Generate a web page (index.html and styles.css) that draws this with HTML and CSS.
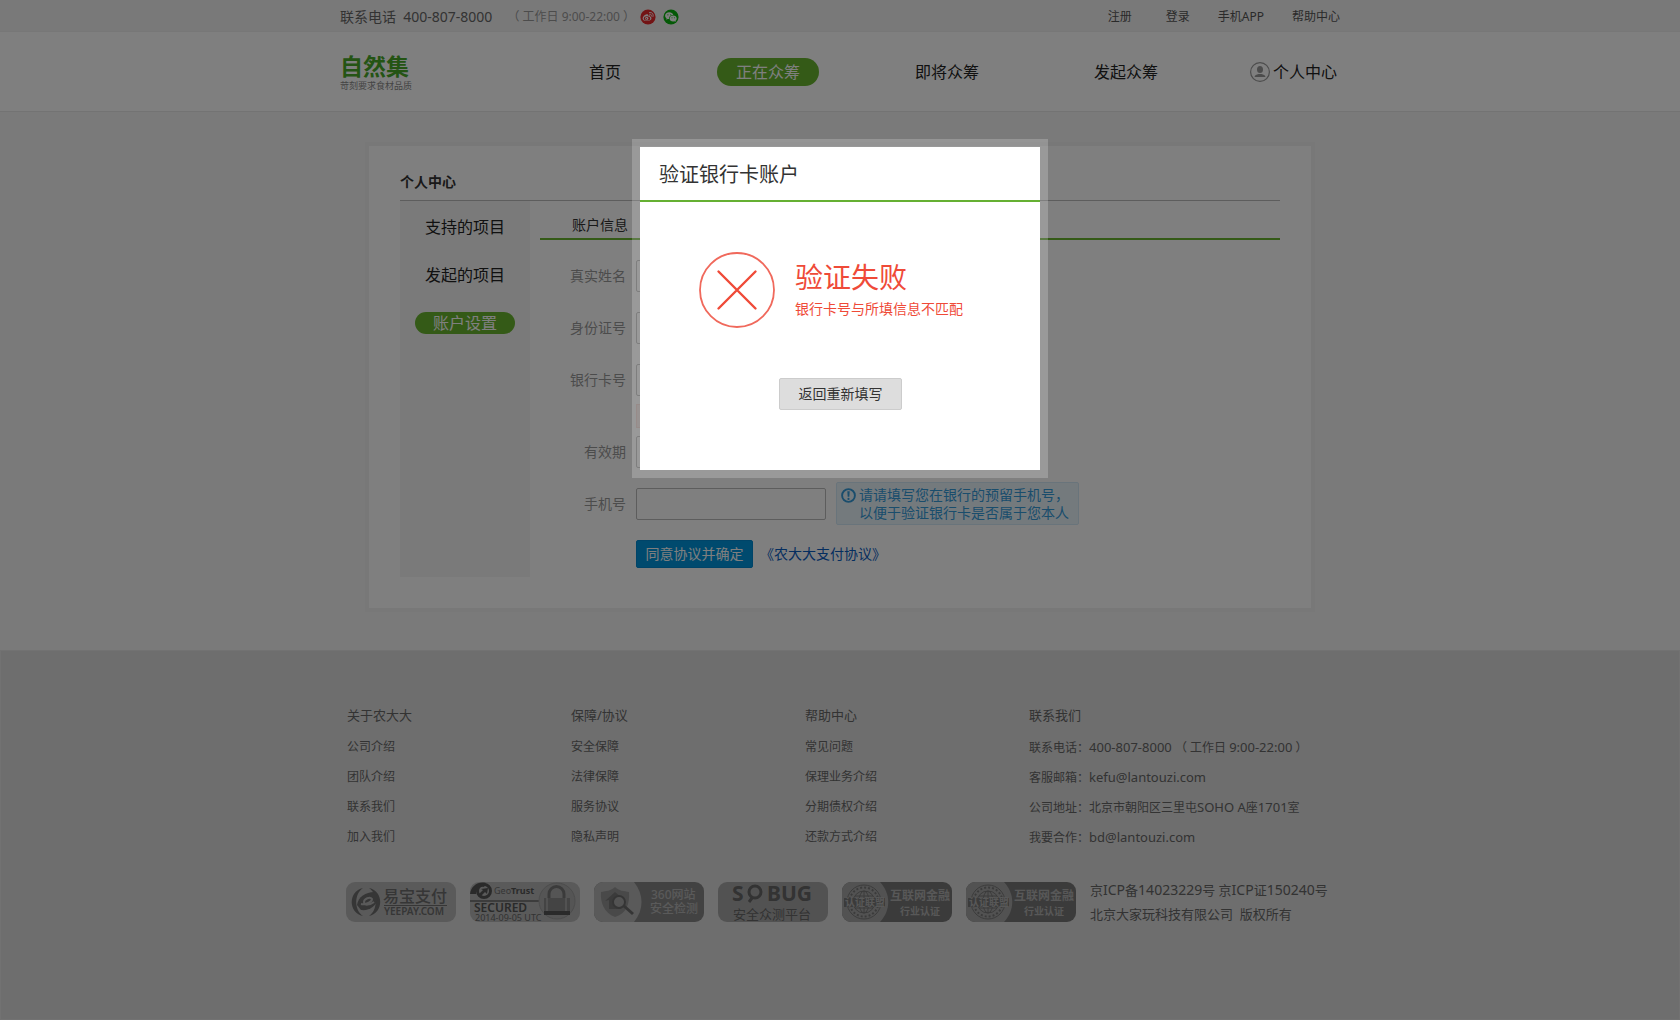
FILE: index.html
```html
<!DOCTYPE html>
<html lang="zh-CN">
<head>
<meta charset="utf-8">
<title>自然集 - 个人中心</title>
<link rel="stylesheet" href="styles.css">
</head>
<body>
<div class="topbar">
  <div class="wrap topbar-in">
    <span class="phone">联系电话&nbsp; 400-807-8000</span>
    <span class="hours">（ 工作日 9:00-22:00 ）</span>
    <a class="social" href="#" aria-label="微博"><svg width="16" height="16" viewBox="0 0 16 16"><circle cx="8" cy="8" r="7.600" fill="#e6292b"/><path d="M6.800 5.200c-2 .5-4.200 2.400-4.200 4.300 0 3.400 8.900 3.400 8.900-.2 0-.9-.6-1.300-1.300-1.500.4-1.300-.6-1.700-2.100-1 .2-1.100-.3-1.800-1.300-1.600z" fill="#fff"/><ellipse cx="7" cy="9.400" rx="3.200" ry="2.100" fill="#e6292b"/><ellipse cx="6.700" cy="9.500" rx="1.700" ry="1.400" fill="#fff"/><circle cx="6.400" cy="9.700" r=".6" fill="#e6292b"/><path d="M9.500 3.500c2.600-.5 4.300 1.500 3.500 4M9.700 5.200c1.300-.2 2 .7 1.700 1.900" fill="none" stroke="#fff" stroke-width=".9" stroke-linecap="round"/></svg></a>
    <a class="social" href="#" aria-label="微信"><svg width="16" height="16" viewBox="0 0 16 16"><circle cx="8" cy="8" r="7.600" fill="#09b20d"/><path d="M6.300 3.300c-2.400 0-4.200 1.500-4.200 3.500 0 1.100.6 2 1.500 2.600l-.4 1.300 1.600-.8 1.300.2c-.4-2.500 1.500-4.200 4.200-4.200-.5-1.600-2.100-2.600-4-2.600z" fill="#fff"/><path d="M10.200 6.500c-2.100 0-3.600 1.300-3.600 3s1.500 3 3.600 3l1.200-.2 1.300.7-.3-1.100c.8-.6 1.300-1.400 1.300-2.400 0-1.700-1.500-3-3.500-3z" fill="#fff"/><g fill="#09b20d"><circle cx="4.900" cy="5.800" r=".6"/><circle cx="7.700" cy="5.800" r=".6"/><circle cx="9" cy="8.700" r=".5"/><circle cx="11.400" cy="8.700" r=".5"/></g></svg></a>
    <nav class="toplinks">
      <a class="wide" href="#">注册</a>
      <a href="#">登录</a>
      <a href="#">手机APP</a>
      <a href="#">帮助中心</a>
    </nav>
  </div>
</div>
<header class="header">
  <div class="wrap header-in">
    <a class="logo" href="#"><strong>自然集</strong><small>苛刻要求食材品质</small></a>
    <nav class="nav">
      <a href="#">首页</a>
      <a class="on" href="#">正在众筹</a>
      <a href="#">即将众筹</a>
      <a href="#">发起众筹</a>
      <a class="user" href="#"><svg width="20" height="20" viewBox="0 0 20 20"><circle cx="10" cy="10" r="9.400" fill="none" stroke="#999" stroke-width="1.200"/><ellipse cx="10" cy="7.500" rx="3" ry="3.600" fill="#999"/><path d="M4.500 15c.3-2 2-2.400 4-3h3c2 .6 3.700 1 4 3z" fill="#999"/></svg>个人中心</a>
    </nav>
  </div>
</header>

<main class="card">
  <h1>个人中心</h1>
  <div class="card-body">
    <nav class="side">
      <a href="#">支持的项目</a>
      <a href="#">发起的项目</a>
      <a class="on" href="#">账户设置</a>
    </nav>
    <section class="account">
      <h2>账户信息</h2>
      <form class="form">
        <div class="row"><label for="name">真实姓名</label><input id="name" type="text"></div>
        <div class="row"><label for="idno">身份证号</label><input id="idno" type="text"></div>
        <div class="row"><label for="card">银行卡号</label><input id="card" type="text"></div>
        <div class="error"></div>
        <div class="row"><label for="valid">有效期</label><input id="valid" type="text"></div>
        <div class="row phone-row"><label for="mobile">手机号</label><input id="mobile" type="text">
          <p class="tip"><svg width="15" height="15" viewBox="0 0 15 15"><circle cx="7.500" cy="7.500" r="6.400" fill="none" stroke="#349ad9" stroke-width="1.900"/><path d="M6.300 3.200h2.400l-.4 5.600H6.700z" fill="#349ad9"/><circle cx="7.500" cy="10.900" r="1.100" fill="#349ad9"/></svg><span>请请填写您在银行的预留手机号<span class="mark">，</span><br>以便于验证银行卡是否属于您本人</span></p>
        </div>
        <div class="submit"><button type="button">同意协议并确定</button><a href="#">《农大大支付协议》</a></div>
      </form>
    </section>
  </div>
</main>

<footer class="footer">
  <div class="wrap">
    <div class="cols">
      <div><h3>关于农大大</h3><a href="#">公司介绍</a><a href="#">团队介绍</a><a href="#">联系我们</a><a href="#">加入我们</a></div>
      <div><h3>保障/协议</h3><a href="#">安全保障</a><a href="#">法律保障</a><a href="#">服务协议</a><a href="#">隐私声明</a></div>
      <div><h3>帮助中心</h3><a href="#">常见问题</a><a href="#">保理业务介绍</a><a href="#">分期债权介绍</a><a href="#">还款方式介绍</a></div>
      <div><h3>联系我们</h3>
        <p>联系电话<span class="mark">：</span><span class="latin">400-807-8000</span> （ 工作日 <span class="latin">9:00-22:00</span> ）</p>
        <p>客服邮箱<span class="mark">：</span><span class="latin">kefu@lantouzi.com</span></p>
        <p>公司地址<span class="mark">：</span>北京市朝阳区三里屯<span class="latin">SOHO A</span>座<span class="latin">1701</span>室</p>
        <p>我要合作<span class="mark">：</span><span class="latin">bd@lantouzi.com</span></p></div>
    </div>
    <div class="certs">
      <a href="#"><svg class="badge" viewBox="0 0 110 40"><rect width="110" height="40" rx="9" fill="#b4b4b4"/><path d="M17 6C2 9 2 31 17 34C8 28 8 12 17 6zM23 6c15 3 15 25 0 28c9-6 9-22 0-28z" fill="#6c6c6c"/><path d="M11 23l4 5c8 1 16-4 17-12l-4-6c-8 0-16 5-17 13z" fill="#6c6c6c"/><path d="M15 22c5 1 11-2 11-5-2-3-8 0-8 3 0 4 6 3 10 0" fill="none" stroke="#b4b4b4" stroke-width="2"/><text x="37" y="20" font-size="16" font-weight="500" fill="#6c6c6c">易宝支付</text><path d="M38 23.500h63" stroke="#6c6c6c"/><text x="38" y="33" font-size="10" fill="#6c6c6c" font-weight="600">YEEPAY.COM</text></svg></a>
      <a href="#"><svg class="badge" viewBox="0 0 110 40"><defs><clipPath id="geo"><rect width="110" height="40" rx="9"/></clipPath></defs><g clip-path="url(#geo)"><rect width="110" height="40" fill="#b4b4b4"/><path d="M0 12C1 4 8-1 16 1l-2 4C9 4 6 8 6 12z" fill="#555"/><circle cx="14" cy="9" r="6.500" fill="none" stroke="#555" stroke-width="3"/><path d="M9 12l4-4-2-1 7-1-1 6-2-2-4 4z" fill="#555"/><text x="24" y="12" font-size="9" fill="#6c6c6c">Geo<tspan font-weight="700" fill="#555">Trust</tspan></text><path d="M0 19h72" stroke="#666" stroke-width="1.500"/><circle cx="87" cy="19" r="18" fill="#aaa" stroke="#999"/><path d="M79 17V12a7.500 7.500 0 0 1 15 0v5" fill="none" stroke="#777" stroke-width="3"/><rect x="74" y="16" width="26" height="16" fill="#888"/><path d="M77 16v13M96 16v13" stroke="#a5a5a5" stroke-width="2"/><rect x="74" y="29" width="26" height="4" fill="#555"/><text x="4" y="30" font-size="12" font-weight="600" fill="#555">SECURED</text><text x="5" y="39" font-size="9" fill="#666">2014-09-05 UTC</text></g></svg></a>
      <a href="#"><svg class="badge" viewBox="0 0 110 40"><rect width="110" height="40" rx="9" fill="#858585"/><path d="M9 0h31c10 12 10 28 0 40H9a9 9 0 0 1-9-9V9a9 9 0 0 1 9-9z" fill="#b4b4b4"/><path d="M21 5c4 4 9 4 14 5 1 12-3 22-14 25C10 31 6 20 7 10c5-1 10-1 14-5z" fill="#939393"/><path d="M11 19l10-9 6 5v12H15v-9z" fill="#777"/><circle cx="25" cy="20" r="6" fill="#a6a6a6" stroke="#6b6b6b" stroke-width="2"/><path d="M30 24l9 8" stroke="#6b6b6b" stroke-width="3"/><g font-size="12" fill="#b4b4b4" font-weight="500"><text x="57" y="17">360网站</text><text x="56" y="31">安全检测</text></g></svg></a>
      <a href="#"><svg class="badge" viewBox="0 0 110 40"><rect width="110" height="40" rx="9" fill="#a5a5a5"/><text y="19" font-size="21" font-weight="700" fill="#666"><tspan x="14">S</tspan><tspan x="49">BUG</tspan></text><circle cx="37" cy="10" r="6" fill="none" stroke="#666" stroke-width="3"/><path d="M34 16l-3 4" stroke="#666" stroke-width="3"/><text x="15" y="37" font-size="13" fill="#666">安全众测平台</text></svg></a>
      <a href="#"><svg class="badge" viewBox="0 0 110 40"><rect width="110" height="40" rx="9" fill="#777"/><path d="M9 0h29c11 12 11 28 0 40H9a9 9 0 0 1-9-9V9a9 9 0 0 1 9-9z" fill="#a5a5a5"/><g fill="none" stroke="#777"><circle cx="22" cy="20" r="17"/><circle cx="22" cy="20" r="14.500" stroke-width="2" stroke-dasharray="2 2"/><circle cx="22" cy="20" r="11"/><ellipse cx="22" cy="20" rx="5" ry="11"/><path d="M22 9v22M11 20h22M13 14h18M13 26h18"/></g><path d="M2 16h41v9H2z" fill="#777"/><text x="3" y="24" font-size="10" font-weight="600" fill="#b0b0b0">认证联盟</text><g font-weight="700" fill="#b0b0b0"><text x="48" y="18" font-size="12">互联网金融</text><text x="58" y="33" font-size="10">行业认证</text></g></svg></a>
      <a href="#"><svg class="badge" viewBox="0 0 110 40"><rect width="110" height="40" rx="9" fill="#777"/><path d="M9 0h29c11 12 11 28 0 40H9a9 9 0 0 1-9-9V9a9 9 0 0 1 9-9z" fill="#a5a5a5"/><g fill="none" stroke="#777"><circle cx="22" cy="20" r="17"/><circle cx="22" cy="20" r="14.500" stroke-width="2" stroke-dasharray="2 2"/><circle cx="22" cy="20" r="11"/><ellipse cx="22" cy="20" rx="5" ry="11"/><path d="M22 9v22M11 20h22M13 14h18M13 26h18"/></g><path d="M2 16h41v9H2z" fill="#777"/><text x="3" y="24" font-size="10" font-weight="600" fill="#b0b0b0">认证联盟</text><g font-weight="700" fill="#b0b0b0"><text x="48" y="18" font-size="12">互联网金融</text><text x="58" y="33" font-size="10">行业认证</text></g></svg></a>
      <p>京<span class="latin">ICP</span>备<span class="latin">14023229</span>号 京<span class="latin">ICP</span>证<span class="latin">150240</span>号<br>北京大家玩科技有限公司&nbsp; 版权所有</p>
    </div>
  </div>
</footer>

<div class="overlay">
  <div class="modal" role="dialog" aria-modal="true" aria-labelledby="dlg-title">
    <h2 id="dlg-title">验证银行卡账户</h2>
    <div class="result">
      <svg width="76" height="76" viewBox="0 0 76 76" fill="none" stroke="#ef4a38" stroke-linecap="round"><circle cx="38" cy="38" r="37" stroke-width="1.800" stroke="#f0695c"/><path d="M19.500 19.500l37 37M56.500 19.500l-37 37" stroke-width="2.400"/></svg>
      <div class="message"><strong>验证失败</strong><p>银行卡号与所填信息不匹配</p></div>
    </div>
    <button type="button">返回重新填写</button>
  </div>
</div>
</body>
</html>
```
FILE: styles.css
```css
* { box-sizing: border-box; }
body, h1, h2, h3, p { margin: 0; }
body {
  min-height: 100vh;
  display: flex;
  flex-direction: column;
  background: #f5f5f5;
  color: #333;
  font: 14px/20px "Noto Sans", "Noto Sans CJK SC", sans-serif;
}
a { color: inherit; text-decoration: none; }
svg { display: block; flex: none; }
button, input { font: inherit; }
.wrap { width: 100%; max-width: 1000px; margin: 0 auto; }
/* full-width punctuation centred in its cell */
.mark { font-family: "Noto Sans CJK TC", sans-serif; }

.topbar { background: #f3f3f3; border-bottom: 1px solid #efefef; color: #666; }
.topbar-in { display: flex; align-items: center; height: 31px; padding-top: 2px; }
.hours { margin: 0 5px 0 15px; font-size: 12px; color: #999; }
.social { margin-right: 7px; }
.toplinks { display: flex; gap: 28px; margin-left: auto; font-size: 12px; color: #555; }
.toplinks .wide { margin-right: 6px; }

.header { background: #fff; border-bottom: 1px solid #e6e6e6; }
.header-in { display: flex; align-items: center; justify-content: space-between; height: 79px; }
.logo { display: flex; flex-direction: column; gap: 1px; padding-top: 2px; color: #48a828; }
.logo strong { font-size: 23px; line-height: 25px; }
.logo small { font-size: 9px; line-height: 12px; color: #888; }
.nav { display: flex; gap: 115px; align-items: center; margin-right: 3px; font-size: 16px; color: #222; }
.nav .on { margin: 0 -19px; padding: 4px 19px; border-radius: 14px; background: #68b42f; color: #fff; }
.nav .user { display: flex; align-items: center; gap: 3px; margin-left: -23px; }

.card { width: calc(100% - 32px); max-width: 950px; margin: 30px auto 38px; padding: 25px 31px 31px; background: #fff; border: 4px solid #f0f0f0; }
.card h1 { padding-bottom: 7px; border-bottom: 1px solid #bbb; font-size: 14px; line-height: 22px; }
.card-body { display: flex; gap: 10px; }
.side { display: flex; flex-direction: column; align-items: center; gap: 26px; width: 130px; min-height: 376px; padding-top: 15px; background: #f5f5f5; font-size: 16px; line-height: 22px; color: #222; }
.side .on { width: 100px; border-radius: 11px; background: #68b42f; color: #fff; text-align: center; }
.account { flex: 1; }
.account h2 { padding: 14px 32px 3px; border-bottom: 2px solid #68b42f; font-size: 14px; line-height: 20px; font-weight: 400; }
.form { padding-top: 20px; }
.row { display: flex; align-items: center; margin-bottom: 20px; }
.row label { width: 86px; margin-right: 10px; text-align: right; color: #999; }
.row input { width: 190px; height: 32px; border: 1px solid #bbb; border-radius: 2px; background: #fff; }
.error { width: 190px; height: 24px; margin: -12px 0 8px 96px; border: 1px solid #fbdcd8; background: #fdeeec; }
.phone-row { margin-bottom: 15px; margin-top: -6px; }
.tip { display: flex; gap: 3px; margin-left: 10px; padding: 2px 9px 2px 4px; border: 1px solid #d3e9f7; border-radius: 2px; background: #e9f4fb; color: #349ad9; line-height: 18px; }
.tip svg { margin-top: 3px; }
.submit { display: flex; align-items: center; margin-left: 96px; }
.submit button { width: 117px; height: 28px; padding: 0; border: 1px solid #0088d0; border-radius: 2px; background: #0094dc; color: #fff; }
.submit a { margin-left: 7px; color: #0a5cbe; }

.footer { flex: 1; padding: 54px 0; background: #dcdcdc; border: 1px solid #e4e4e4; color: #666; }
.cols { display: grid; grid-template-columns: 224px 234px 224px 1fr; padding-left: 7px; font-size: 12px; line-height: 30px; }
.cols h3 { font-size: 13px; font-weight: 400; line-height: 20px; margin-bottom: 7px; }
.cols a { display: block; }
.cols p { height: 30px; white-space: nowrap; }
.cols .latin { font-size: 13px; }
.certs { display: flex; align-items: center; gap: 14px; margin-top: 26px; padding-left: 6px; font-size: 13px; line-height: 24px; }
.certs p { white-space: nowrap; }
.certs .latin { font-size: 14px; }
.badge { width: 110px; height: 40px; overflow: visible; font-family: "Noto Sans", "Noto Sans CJK SC", sans-serif; }

.overlay { position: fixed; inset: 0; display: flex; justify-content: center; align-items: flex-start; padding-top: 139px; background: rgba(0, 0, 0, .5); }
.modal { width: 416px; border: 8px solid rgba(255, 255, 255, .2); background: #fff; background-clip: padding-box; }
.modal h2 { padding: 14px 19px 11px; border-bottom: 2px solid #65b032; font-size: 20px; line-height: 28px; font-weight: 400; }
.result { display: flex; align-items: center; gap: 20px; padding: 50px 59px; color: #ef4a38; }
.message { padding-bottom: 2px; }
.message strong { display: block; margin-bottom: 4px; font-size: 28px; line-height: 36px; font-weight: 400; }
.modal button { display: block; width: 123px; height: 32px; margin: 0 auto 60px 139px; padding: 0; border: 1px solid #ccc; border-radius: 2px; background: #ddd; color: #333; }
```
